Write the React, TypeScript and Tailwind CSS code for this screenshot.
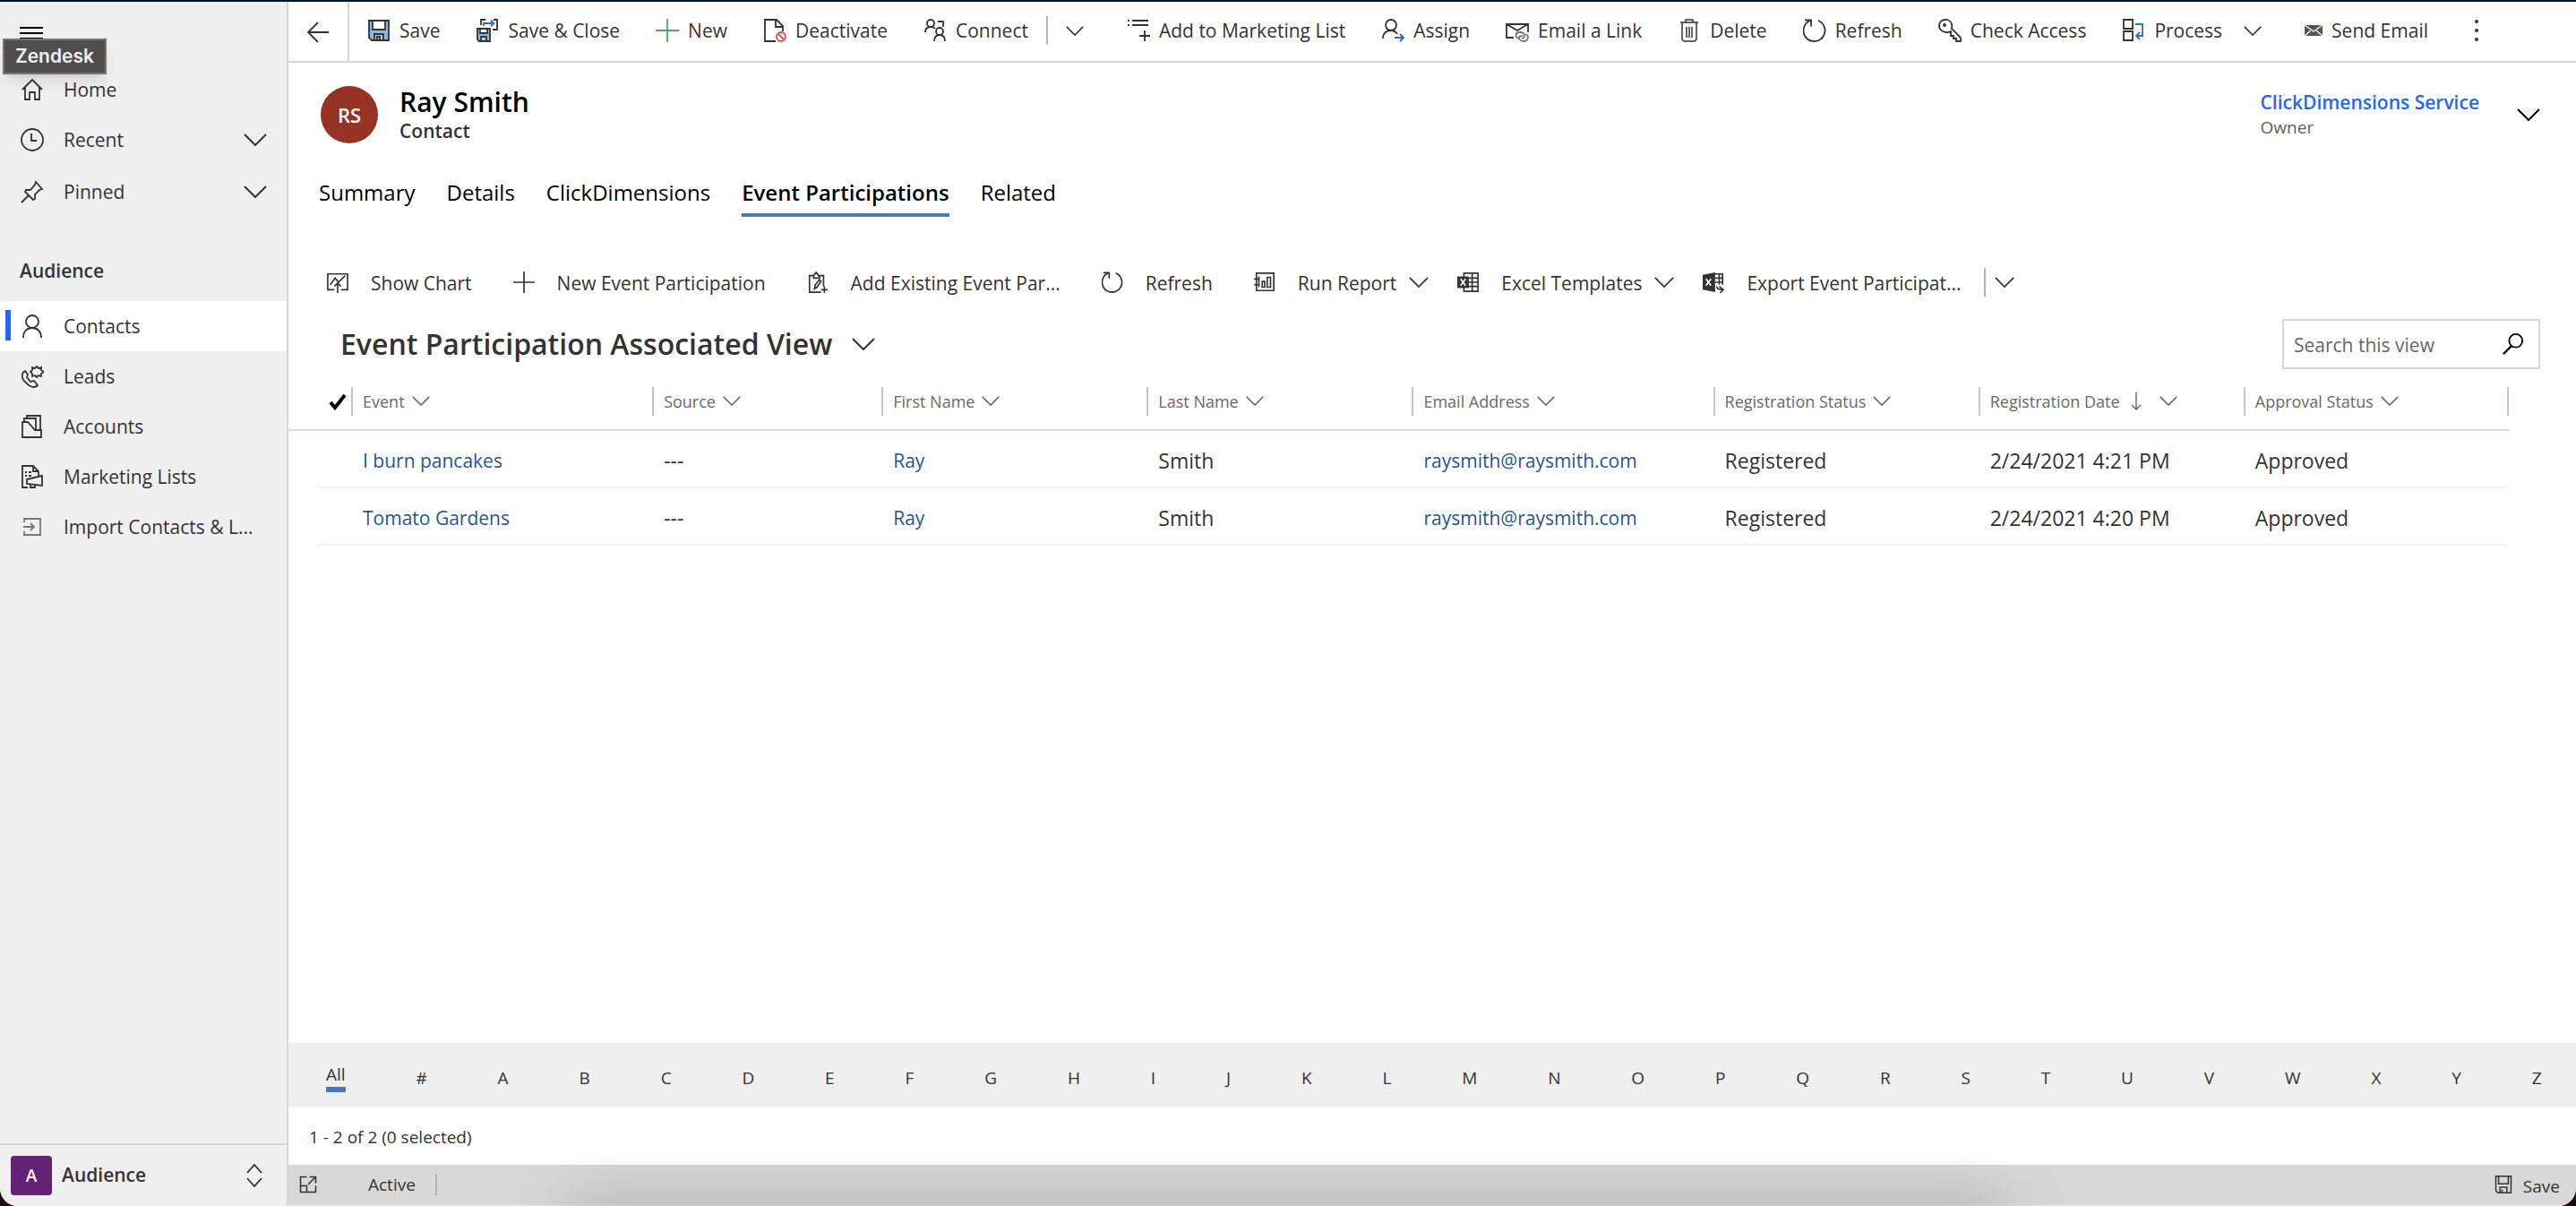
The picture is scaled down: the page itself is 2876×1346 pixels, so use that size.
import React from 'react';

const Svg: React.FC<{ children: React.ReactNode; className?: string; box?: string }> = ({ children, className = 'w-[26px] h-[26px]', box = '0 0 26 26' }) => (
    <svg viewBox={box} className={`${className} flex-shrink-0`} fill="none" stroke="currentColor" strokeWidth="1.8" aria-hidden="true">
        {children}
    </svg>
);

const Chevron: React.FC<{ className?: string }> = ({ className = 'w-[22px] h-3' }) => (
    <svg viewBox="0 0 26 14" className={`${className} flex-shrink-0`} fill="none" stroke="currentColor" strokeWidth="2" aria-hidden="true">
        <path d="M1 1l12 12L25 1" />
    </svg>
);

const HomeIcon = () => <Svg><path d="M2 13L13 2l11 11M5 10.500V24h5v-8h6v8h5V10.500" /></Svg>;
const ClockIcon = () => <Svg><circle cx="13" cy="13" r="12" /><path d="M12 6v8h6" /></Svg>;
const PinIcon = () => <Svg><path d="M17 2l7 8-3 1-5 5v5l-2 1-9-9 1-2h5l5-6zM9 17l-8 8" /></Svg>;
const PersonIcon = () => <Svg><circle cx="13" cy="8" r="7" /><path d="M3 26c0-7 4-11 10-11s10 4 10 11" /></Svg>;
const LeadIcon = () => (
    <Svg>
        <path d="M5 7c-4 2-5 8 1 13 5 6 10 6 13 3l-4-5-4 1-4-5 1-3z" />
        <path d="M18 2l2 2 3-1v3l3 2-3 2v3l-3-1-2 2-2-2-3 1v-3l-2-2 2-2V3l3 1z" />
    </Svg>
);
const AccountIcon = () => <Svg><path d="M2 25V8h6l8 9h7v8zM4 8V4h13v13M7 4V1h15v16" /></Svg>;
const MarketingIcon = () => (
    <Svg>
        <path d="M8 25H2V1h12l6 6v5M14 1v6h6M5 8h2M9 8h3M5 12h2M9 12h3" />
        <path d="M7 16l17-4v11l-17-2zM11 22v3h5v-3" />
    </Svg>
);
const ImportIcon = () => <Svg><path d="M4 8V4h18v18H4v-4M3 13h11M11 9l4 4-4 4" stroke="#777" /></Svg>;

const SaveIcon = () => (
    <Svg>
        <path d="M2 2h22v22H5l-3-3z" fill="#8db8e4" />
        <path d="M6 2h14v10H6z" fill="#fff" />
        <path d="M8 24v-7h10v7z" fill="#c8c6c4" />
        <path d="M11 24v-4h3v4" />
    </Svg>
);
const SaveCloseIcon = () => (
    <Svg>
        <path d="M6 7V1h5M20 1h4v11h-5" />
        <path d="M9 8V5h11M17 1.500L20.500 5 17 8.500" stroke="#2f6bc0" />
        <path d="M2 11h14v14H4l-2-2z" fill="#8db8e4" />
        <path d="M5 11h8v5H5z" fill="#fff" />
        <path d="M6 25v-5h6v5z" fill="#c8c6c4" />
    </Svg>
);
const PlusIcon: React.FC<{ color?: string }> = ({ color = 'currentColor' }) => <Svg><path d="M13 0v26M0 13h26" stroke={color} /></Svg>;
const DeactivateIcon = () => (
    <Svg>
        <path d="M14 25H2V1h13l7 7v6M14 1v8h8" />
        <g stroke="#e0504b"><circle cx="20" cy="20" r="5" /><path d="M17 17l6 6" /></g>
    </Svg>
);
const ConnectIcon = () => (
    <Svg>
        <circle cx="8" cy="5" r="4" /><path d="M2 15c0-4 2-6 6-6s4 1 5 2M16 3h6v6" />
        <circle cx="18" cy="14" r="4" /><path d="M12 25c0-5 2-7 6-7s6 2 6 7" />
    </Svg>
);
const ListIcon = () => <Svg><path d="M6 2h18M6 7h18M1 2h2M1 7h2M20 13v12M14 19h12" /></Svg>;
const AssignIcon = () => (
    <Svg>
        <circle cx="11" cy="7" r="6" /><path d="M2 22c0-6 4-9 9-9 3 0 5 1 7 4" />
        <path d="M15 21h10M21 17l4 4-4 4" stroke="#2f6bc0" strokeWidth="2" />
    </Svg>
);
const EmailLinkIcon = () => (
    <Svg>
        <path d="M9 21H1V6h24v9M1 6l12 7 12-7" />
        <g stroke="#777"><path d="M16 22c-6 0-6-7 0-7 4 0 5 2 5 4s-2 3-3 3" /><path d="M22 17c4 1 4 8-2 8-3 0-5-2-5-4s2-2 4-2" /></g>
    </Svg>
);
const DeleteIcon = () => <Svg><path d="M3 4h20M9 4V1h8v3M5 4v19l2 2h12l2-2V4M10 9v12M13 9v12M16 9v12" strokeWidth="1.500" /></Svg>;
const RefreshIcon = () => <Svg><path d="M17 2a12 12 0 1 1-9 0M2 1.500h7v7" /></Svg>;
const KeyIcon = () => <Svg><path d="M14 14c-6 3-13-1-13-6 0-9 12-9 14-2 .500 2 0 4 0 5l10 10v4h-5v-3h-3v-3h-3z" /><circle cx="7" cy="7" r="1" /></Svg>;
const ProcessIcon = () => (
    <Svg>
        <path d="M2 1h10v10H2zM2 14h10v10H2z" />
        <path d="M15 6h8v13h-6M20 15l-4 4 4 4" stroke="#2f6bc0" />
    </Svg>
);
const MailIcon = () => <Svg className="w-5 h-[26px]" box="0 0 20 26"><path d="M0 7h20v12H0z" fill="#555" stroke="none" /><path d="M0 7l10 7 10-7M0 19l7-6M20 19l-7-6" stroke="#fff" strokeWidth="1.200" /></Svg>;

const ChartIcon = () => <Svg><path d="M9 22H1V3h24v19h-8M4 16l6-8 4 5 8-8M13 26V14M9 18l4-4 4 4" /></Svg>;
const ClipboardIcon = () => <Svg><path d="M17 25H3V5h5l3-4 3 4h6v13M8 5v3h7V5M9 21l1-5 5-6 2 2-5 7zM21 18v8M17 22h8" /></Svg>;
const ReportIcon = () => <Svg><path d="M3 2h21v21H3zM10 19v-7h3v7zM16 19V7h4v12zM0 9h6M0 16h6M6 6v13" /></Svg>;
const ExcelTableIcon = () => (
    <Svg>
        <path d="M8 2h17v22H8zM8 8h17M8 13h17M8 18h17M18 2v22" />
        <path d="M0 6h14v14H0z" fill="#333" stroke="none" /><path d="M4 9l6 8M10 9l-6 8" stroke="#fff" />
    </Svg>
);
const ExcelExportIcon = () => (
    <Svg>
        <path d="M15 3h9v13M15 8h9M15 13h9M20 3v13" />
        <path d="M0 4l15-3v24L0 22z" fill="#333" stroke="none" /><path d="M4 9l6 8M10 9l-6 8" stroke="#fff" />
        <path d="M17 18c0 3 2 4 7 4M20 18l5 4-4 4" />
    </Svg>
);
const PlainSaveIcon = () => <Svg className="w-5 h-5"><path d="M2 1h22v24H5l-3-3zM6 1v11h14V1M8 25v-8h10v8M11 25v-5" strokeWidth="2" /></Svg>;
const PopOutIcon = () => <Svg className="w-5 h-5"><path d="M11 2H2v22h22v-9M2 15h9v9M15 2h9v9M24 2L13 13" strokeWidth="2" /></Svg>;

const Command: React.FC<{ icon: React.ReactNode; label: string }> = ({ icon, label }) => (
    <button className="flex items-center gap-[10px] px-5 h-full whitespace-nowrap">
        {icon}
        <span className="pt-0.5">{label}</span>
    </button>
);

const SubCommand: React.FC<{ icon: React.ReactNode; label: string; menu?: boolean }> = ({ icon, label, menu }) => (
    <button className={`flex items-center whitespace-nowrap ${menu ? '-mr-[14px]' : ''}`}>
        <span className="mr-[25px] [&>svg]:w-6 [&>svg]:h-6">{icon}</span>
        <span className="pt-1">{label}</span>
        {menu && <Chevron className="ml-[14px] w-[22px] h-3" />}
    </button>
);

const CommandBar = () => (
    <div className="h-[68px] flex-shrink-0 flex items-stretch border-b-2 border-[#d6d6d6] text-[21px]">
        <button aria-label="Back" className="w-[68px] flex items-center justify-center border-r-2 border-[#d6d6d6]">
            <Svg><path d="M25 14H2M13 3L2 14l11 11" /></Svg>
        </button>
        <div className="flex items-center pb-0.5">
            <Command icon={<SaveIcon />} label="Save" />
            <Command icon={<SaveCloseIcon />} label="Save & Close" />
            <Command icon={<PlusIcon color="#4fa862" />} label="New" />
            <Command icon={<DeactivateIcon />} label="Deactivate" />
            <Command icon={<ConnectIcon />} label="Connect" />
            <button aria-label="More connect options" className="h-8 pl-5 pr-7 border-l-2 border-[#b5b5b5]"><Chevron className="w-5 h-[11px]" /></button>
            <Command icon={<ListIcon />} label="Add to Marketing List" />
            <Command icon={<AssignIcon />} label="Assign" />
            <Command icon={<EmailLinkIcon />} label="Email a Link" />
            <Command icon={<DeleteIcon />} label="Delete" />
            <Command icon={<RefreshIcon />} label="Refresh" />
            <Command icon={<KeyIcon />} label="Check Access" />
            <Command icon={<ProcessIcon />} label="Process" />
            <button aria-label="More processes" className="pl-1 pr-7"><Chevron className="w-5 h-[11px]" /></button>
            <Command icon={<MailIcon />} label="Send Email" />
            <button aria-label="More commands" className="px-8">
                <Svg className="w-1 h-[26px]" box="0 0 4 26"><g fill="#333" stroke="none"><circle cx="2" cy="3" r="2" /><circle cx="2" cy="13" r="2" /><circle cx="2" cy="23" r="2" /></g></Svg>
            </button>
        </div>
    </div>
);

const navItems = [
    { label: 'Contacts', icon: <PersonIcon />, active: true },
    { label: 'Leads', icon: <LeadIcon /> },
    { label: 'Accounts', icon: <AccountIcon /> },
    { label: 'Marketing Lists', icon: <MarketingIcon /> },
    { label: 'Import Contacts & L...', icon: <ImportIcon /> },
];

const Sidebar = () => (
    <aside className="relative w-[322px] flex-shrink-0 flex flex-col bg-[#efefef] border-r-2 border-[#d6d6d6] text-[21px]">
        <button aria-label="Site map" className="h-[70px] pl-[22px] pt-[27px] flex items-start text-black">
            <Svg className="w-[26px] h-4" box="0 0 26 16"><path d="M0 2h26M0 8h26M0 14h26" strokeWidth="2" /></Svg>
        </button>
        <div className="absolute left-[3px] top-[41px] h-10 px-3 flex items-center bg-[#504d4d] border-2 border-[#757373] shadow-lg text-[#f0f0f0] font-[Inter] font-semibold">Zendesk</div>
        <nav>
            <a href="#home" className="h-14 flex items-center pl-[23px] gap-[22px]"><HomeIcon /><span className="pt-0.5">Home</span></a>
            <button className="w-full h-14 flex items-center pl-[23px] gap-[22px]"><ClockIcon /><span className="pt-0.5">Recent</span><Chevron className="ml-auto mr-[22px] w-[26px] h-[14px]" /></button>
            <button className="w-full h-[60px] flex items-center pl-[23px] gap-[22px]"><PinIcon /><span className="pt-0.5">Pinned</span><Chevron className="ml-auto mr-[22px] w-[26px] h-[14px]" /></button>
            <h2 className="mt-[26px] h-[66px] flex items-center pl-[22px] font-semibold">Audience</h2>
            {navItems.map(item => (
                <a key={item.label} href="#nav" className={`relative h-14 flex items-center pl-[23px] gap-[22px] whitespace-nowrap ${item.active ? 'bg-white' : ''}`}>
                    {item.active && <span className="absolute left-[6px] top-[10px] w-[6px] h-[34px] bg-[#2266ff]" />}
                    {item.icon}
                    <span className="pt-0.5">{item.label}</span>
                </a>
            ))}
        </nav>
        <button className="mt-auto h-[70px] pl-3 pr-[26px] flex items-center border-t-2 border-[#d6d6d6] font-semibold">
            <span className="w-[46px] h-11 mr-[11px] flex items-center justify-center rounded bg-[#622376] text-white text-[19px]">A</span>
            Audience
            <Svg className="ml-auto w-5 h-[26px]" box="0 0 20 26"><path d="M2 10l8-9 8 9M2 16l8 9 8-9" /></Svg>
        </button>
    </aside>
);

const tabs = ['Summary', 'Details', 'ClickDimensions', 'Event Participations', 'Related'];

const RecordHeader = () => (
    <>
        <header className="mt-[26px] h-16 pl-9 pr-10 flex items-center">
            <div className="w-16 h-16 rounded-full bg-[#963324] text-white text-[22px] font-semibold flex items-center justify-center">RS</div>
            <div className="ml-6">
                <h1 className="text-3xl leading-9 font-semibold text-black">Ray Smith</h1>
                <p className="text-[21px] leading-7 font-semibold">Contact</p>
            </div>
            <div className="ml-auto mr-[42px]">
                <a href="#owner" className="block text-[21px] leading-7 font-semibold text-[#2266ff]">ClickDimensions Service</a>
                <p className="text-[19px] leading-7 text-[#605e5c]">Owner</p>
            </div>
            <button aria-label="Expand header" className="text-black"><Chevron className="w-[26px] h-[14px]" /></button>
        </header>
        <div role="tablist" className="mt-8 pl-[34px] flex gap-[35px] text-2xl text-black">
            {tabs.map(tab => (
                <button key={tab} role="tab" aria-selected={tab === 'Event Participations'} className={`h-[50px] border-b-4 ${tab === 'Event Participations' ? 'font-semibold border-[#4a7ab8]' : 'border-transparent'}`}>{tab}</button>
            ))}
        </div>
    </>
);

const columns = ['Event', 'Source', 'First Name', 'Last Name', 'Email Address', 'Registration Status', 'Registration Date', 'Approval Status'];

const rows = [
    { event: 'I burn pancakes', date: '2/24/2021 4:21 PM' },
    { event: 'Tomato Gardens', date: '2/24/2021 4:20 PM' },
];

const ParticipationTable = () => (
    <div className="mt-1 pr-[75px]">
        <table className="w-full table-fixed text-left">
            <colgroup>
                <col className="w-8" />
                <col className="w-[38px]" />
                <col className="w-[336px]" />
                <col className="w-[256px]" />
                <col className="w-[296px]" />
                <col className="w-[296px]" />
                <col className="w-[336px]" />
                <col className="w-[296px]" />
                <col className="w-[296px]" />
                <col className="w-[296px]" />
            </colgroup>
            <thead>
                <tr className="h-16 border-b-2 border-[#dadada] text-[18px] text-[#6b6967]">
                    <th colSpan={2} aria-label="Select all">
                        <Svg className="ml-[45px] w-5 h-5" box="0 0 20 20"><path d="M2 11l5 6L18 3" stroke="#000" strokeWidth="4" /></Svg>
                    </th>
                    {columns.map(name => (
                        <th key={name} className="font-normal">
                            <div className={`h-8 flex items-center pl-[11px] border-l-2 border-[#c4c4c4] whitespace-nowrap ${name === 'Approval Status' ? 'border-r-2' : ''}`}>
                                <span className="pt-0.5">{name}</span>
                                {name === 'Registration Date' && (
                                    <Svg className="ml-3 mr-3 w-3 h-5" box="0 0 12 20"><path d="M6 0v19M1 14l5 5 5-5" strokeWidth="1.500" /></Svg>
                                )}
                                <Chevron className="ml-2 w-5 h-[11px]" />
                            </div>
                        </th>
                    ))}
                </tr>
            </thead>
            <tbody className="text-[21px] leading-7">
                {rows.map(row => (
                    <tr key={row.event} className="h-16 [&>td]:pt-1 [&>td]:pl-[13px] [&>td+td]:border-b-2 [&>td+td]:border-[#f2f2f2]">
                        <td />
                        <td />
                        <td><a href="#event" className="text-[#1f5599]">{row.event}</a></td>
                        <td className="text-[23px] leading-7">---</td>
                        <td><a href="#first" className="text-[#1f5599]">Ray</a></td>
                        <td className="text-[23px] leading-7">Smith</td>
                        <td><a href="#mail" className="text-[#1f5599]">raysmith@raysmith.com</a></td>
                        <td className="text-[23px] leading-7">Registered</td>
                        <td className="text-[23px] leading-7">{row.date}</td>
                        <td className="text-[23px] leading-7">Approved</td>
                    </tr>
                ))}
            </tbody>
        </table>
    </div>
);

const SubGrid = () => (
    <section>
        <div className="mt-12 h-[50px] pl-[43px] flex items-center gap-[46px] text-[21px]">
            <SubCommand icon={<ChartIcon />} label="Show Chart" />
            <SubCommand icon={<PlusIcon />} label="New Event Participation" />
            <SubCommand icon={<ClipboardIcon />} label="Add Existing Event Par..." />
            <SubCommand icon={<RefreshIcon />} label="Refresh" />
            <SubCommand icon={<ReportIcon />} label="Run Report" menu />
            <SubCommand icon={<ExcelTableIcon />} label="Excel Templates" menu />
            <SubCommand icon={<ExcelExportIcon />} label="Export Event Participat..." />
            <button aria-label="More export options" className="-ml-5 h-8 pl-[10px] border-l-2 border-[#b5b5b5]"><Chevron /></button>
        </div>
        <div className="mt-4 h-14 pl-[58px] pr-10 flex items-center">
            <button className="flex items-center gap-[22px] text-[32px] font-semibold">
                Event Participation Associated View
                <Chevron className="w-[26px] h-[14px]" />
            </button>
            <label className="ml-auto w-[288px] h-14 flex items-center border-2 border-[#d6d6d6] pl-[11px] pr-4">
                <input type="search" aria-label="Search this view" placeholder="Search this view" className="min-w-0 flex-1 pt-1 text-[21px] placeholder:text-[#666] outline-none" />
                <Svg className="w-6 h-6 text-black"><circle cx="16" cy="9" r="8" strokeWidth="2" /><path d="M11 15L1 25" strokeWidth="2.500" /></Svg>
            </label>
        </div>
        <ParticipationTable />
    </section>
);

const letters = ['#', ...'ABCDEFGHIJKLMNOPQRSTUVWXYZ'];

const Footer = () => (
    <footer className="mt-auto">
        <div className="h-[72px] pl-[42px] pr-[38px] pt-1 flex items-center justify-between bg-[#efefef] text-[19px]">
            <button className="border-b-[6px] border-[#4a7ab8]">All</button>
            {letters.map(letter => <button key={letter} className="pt-0.5">{letter}</button>)}
        </div>
        <p className="h-16 pl-[23px] pt-0.5 flex items-center text-[19px]">1 - 2 of 2 (0 selected)</p>
        <div className="h-[46px] pl-3 pr-[18px] flex items-center bg-[#d8d8d8] border-b-2 border-[#e0e0e0] text-[19px]">
            <button aria-label="Pop out"><PopOutIcon /></button>
            <span className="ml-[57px] pr-[22px] border-r-2 border-[#b5b5b5] leading-6">Active</span>
            <button className="ml-auto flex items-center gap-3"><PlainSaveIcon /><span className="pt-1">Save</span></button>
        </div>
    </footer>
);

export default function App() {
    return (
        <div className="bg-[#22080d]">
            <div className="relative min-h-screen flex flex-col bg-white rounded-b-[20px] overflow-hidden border-t-2 border-[#001433] font-['Open_Sans',sans-serif] text-[#333]">
                <div className="flex-1 flex">
                    <Sidebar />
                    <main className="flex-1 min-w-0 flex flex-col">
                        <CommandBar />
                        <RecordHeader />
                        <SubGrid />
                        <Footer />
                    </main>
                </div>
                <div className="absolute inset-x-[22%] top-full h-10 pointer-events-none shadow-[0_0_70px_rgba(0,0,0,0.26)]" />
            </div>
        </div>
    );
}
